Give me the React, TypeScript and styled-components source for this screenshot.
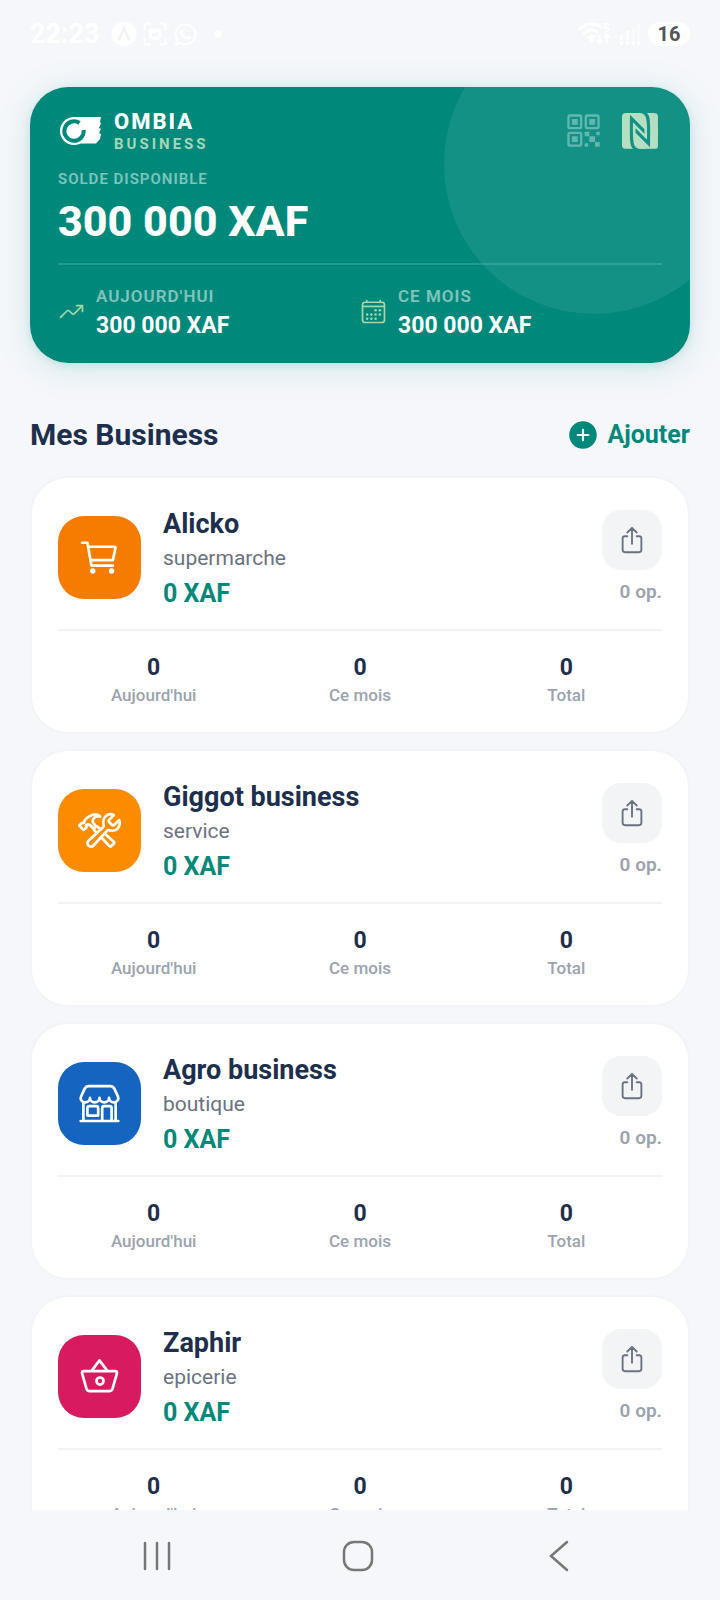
// libs
import { memo } from 'react';
import styled, { createGlobalStyle } from 'styled-components';
import {
  IoAddCircle,
  IoBasketOutline,
  IoCalendarOutline,
  IoCartOutline,
  IoConstructOutline,
  IoLogoWhatsapp,
  IoQrCodeOutline,
  IoShareOutline,
  IoStorefrontOutline,
  IoTrendingUpOutline,
} from 'react-icons/io5';
import { SiNfc } from 'react-icons/si';

// types
import type { IconType } from 'react-icons';

type Business = {
  readonly name: string;
  readonly kind: string;
  readonly color: string;
  readonly icon: IconType;
};

const BUSINESSES: readonly Business[] = [
  { name: 'Alicko', kind: 'supermarche', color: '#f57c00', icon: IoCartOutline },
  { name: 'Giggot business', kind: 'service', color: '#fb8c00', icon: IoConstructOutline },
  { name: 'Agro business', kind: 'boutique', color: '#1565c0', icon: IoStorefrontOutline },
  { name: 'Zaphir', kind: 'epicerie', color: '#d81b60', icon: IoBasketOutline },
];

const PERIODS = ["Aujourd'hui", 'Ce mois', 'Total'];

const GlobalStyle = createGlobalStyle`
  *, *::before, *::after {
    box-sizing: border-box;
  }

  body {
    margin: 0;
    background: #f5f7fb;
    font-family: Roboto, 'Noto Sans', sans-serif;
    color: #1e2f4d;
  }

  h1, h2, p, ul, dl, dt, dd {
    margin: 0;
    padding: 0;
  }

  button {
    font-family: inherit;
    border: 0;
    padding: 0;
    background: none;
    cursor: pointer;
  }

  svg {
    display: block;
    flex: none;
  }
`;

const Screen = styled.div`
  display: flex;
  flex-direction: column;
  height: 100vh;
`;

const StatusBar = styled.header`
  display: flex;
  align-items: center;
  justify-content: space-between;
  flex: none;
  height: 60px;
  padding: 8px 30px 0;
  color: #ffffff;
`;

const StatusGroup = styled.div<{ readonly gap: number }>`
  display: flex;
  align-items: center;
  gap: ${({ gap }) => gap}px;
`;

const Clock = styled.time`
  font-size: 27px;
  font-weight: 700;
  line-height: 32px;
  margin-right: 5px;
`;

const Dot = styled.span`
  width: 8px;
  height: 8px;
  margin-left: 10px;
  border-radius: 50%;
  background: #ffffff;
`;

const Battery = styled.span`
  width: 42px;
  border-radius: 12px;
  background: #ffffff;
  color: #555555;
  font-size: 20px;
  font-weight: 700;
  line-height: 24px;
  text-align: center;
`;

const Content = styled.main`
  flex: 1;
  min-height: 0;
  overflow-y: auto;
  scrollbar-width: none;
  padding: 27px 30px 0;
`;

const BalanceShadow = styled.div`
  border-radius: 38px;
  box-shadow: 0 5px 36px rgba(0, 137, 123, 0.14), 0 2px 8px rgba(0, 137, 123, 0.14);
`;

const Balance = styled.section`
  position: relative;
  overflow: hidden;
  padding: 24px 28px 23px;
  border-radius: 38px;
  background: #00897b;
  color: #ffffff;
`;

const Halo = styled.span`
  position: absolute;
  top: -73px;
  right: -54px;
  width: 300px;
  height: 300px;
  border-radius: 50%;
  background: rgba(255, 255, 255, 0.07);
`;

const BrandRow = styled.div`
  display: flex;
  align-items: flex-start;
  justify-content: space-between;
`;

const Brand = styled.div`
  display: flex;
  align-items: center;
  gap: 11px;
`;

const BrandName = styled.h1`
  font-size: 22px;
  font-weight: 800;
  line-height: 22px;
  letter-spacing: 2px;
`;

const BrandTag = styled.p`
  margin-top: 2px;
  font-size: 15px;
  font-weight: 700;
  line-height: 18px;
  letter-spacing: 3px;
  color: #a5d6b7;
`;

const CardActions = styled.div`
  position: relative;
  display: flex;
  align-items: center;
  gap: 20px;
  padding: 1px 4px 0 0;
`;

const CardAction = styled.button<{ readonly tint: string }>`
  color: ${({ tint }) => tint};
`;

const BalanceLabel = styled.p`
  margin-top: 17px;
  font-size: 15px;
  font-weight: 600;
  line-height: 18px;
  letter-spacing: 1px;
  color: rgba(255, 255, 255, 0.5);
`;

const BalanceAmount = styled.p`
  margin-top: 8px;
  font-size: 43px;
  font-weight: 800;
  line-height: 50px;
`;

const Periods = styled.div`
  position: relative;
  display: grid;
  grid-template-columns: 1fr 1fr;
  margin-top: 17px;
  padding-top: 21px;
  border-top: 2px solid rgba(255, 255, 255, 0.14);
`;

const Period = styled.div`
  display: flex;
  align-items: flex-start;
  gap: 11px;

  > svg {
    margin-top: 12px;
    color: #a5d6a7;
  }
`;

const PeriodLabel = styled.dt`
  font-size: 17px;
  font-weight: 600;
  line-height: 20px;
  letter-spacing: 1px;
  color: rgba(255, 255, 255, 0.5);
`;

const PeriodValue = styled.dd`
  margin-top: 6px;
  font-size: 23px;
  font-weight: 700;
  line-height: 28px;
`;

const SectionHeader = styled.div`
  display: flex;
  align-items: center;
  justify-content: space-between;
  margin: 54px 0 23px;
`;

const SectionTitle = styled.h2`
  font-size: 30px;
  font-weight: 700;
  line-height: 36px;
`;

const AddButton = styled.button`
  display: flex;
  align-items: center;
  gap: 7px;
  font-size: 25px;
  font-weight: 700;
  line-height: 36px;
  color: #00897b;
`;

const List = styled.ul`
  display: flex;
  flex-direction: column;
  gap: 15px;
  padding-bottom: 30px;
  list-style: none;
`;

const Card = styled.li`
  padding: 30px 26px 26px;
  border: 2px solid #f3f4f7;
  border-radius: 38px;
  background: #ffffff;
`;

const CardTop = styled.div`
  display: flex;
  align-items: center;
`;

const Tile = styled.span<{ readonly color: string }>`
  display: flex;
  align-items: center;
  justify-content: center;
  flex: none;
  width: 83px;
  height: 83px;
  margin: 0 22px 2px 0;
  border-radius: 26px;
  background: ${({ color }) => color};
  color: #ffffff;
`;

const Details = styled.div`
  flex: 1;
  min-width: 0;
`;

const Name = styled.h2`
  font-size: 27px;
  font-weight: 700;
  line-height: 32px;
`;

const Kind = styled.p`
  margin-top: 5px;
  font-size: 21px;
  line-height: 26px;
  color: #6b7280;
`;

const Amount = styled.p`
  margin-top: 8px;
  font-size: 25px;
  font-weight: 700;
  line-height: 30px;
  color: #00897b;
`;

const Side = styled.div`
  display: flex;
  flex-direction: column;
  align-items: flex-end;
  gap: 10px;
  margin-bottom: 3px;
`;

const ShareButton = styled.button`
  display: flex;
  align-items: center;
  justify-content: center;
  width: 60px;
  height: 60px;
  border-radius: 19px;
  background: #f3f4f6;
  color: #6b7280;
`;

const Operations = styled.span`
  font-size: 19px;
  font-weight: 600;
  line-height: 24px;
  color: #9ca3af;
`;

const Stats = styled.dl`
  display: grid;
  grid-template-columns: repeat(3, 1fr);
  gap: 15px;
  margin-top: 20px;
  padding-top: 23px;
  border-top: 2px solid #f3f4f6;
  text-align: center;
`;

const Stat = styled.div`
  display: flex;
  flex-direction: column-reverse;
  gap: 2px;
`;

const StatLabel = styled.dt`
  font-size: 17px;
  font-weight: 500;
  line-height: 22px;
  color: #9ca3af;
`;

const StatValue = styled.dd`
  font-size: 23px;
  font-weight: 700;
  line-height: 28px;
`;

const NavBar = styled.nav`
  display: grid;
  grid-template-columns: repeat(3, 1fr);
  flex: none;
  height: 90px;
  padding: 2px 60px 0 56px;
  background: #f5f7fb;
`;

const NavButton = styled.button`
  display: flex;
  align-items: center;
  justify-content: center;
  color: #777777;
`;

const Logo = () => (
  <svg width="45" height="32" viewBox="0 0 45 32" fill="none" aria-hidden="true">
    <path d="M18 1H43L42 6l1 1-2 5 2 1-2 4 2 1-1 5-4 4.500H20z" fill="#ffffff" />
    <circle cx="16" cy="15" r="14" fill="#ffffff" />
    <path d="M21.500 7A9.700 9.700 0 1 0 25.700 14" stroke="#00897b" strokeWidth="4" />
    <circle cx="16" cy="15" r="6" fill="#ffffff" />
    <path d="M17 10l4-1h10v4H19z" fill="#ffffff" />
  </svg>
);

const ExpoBadge = () => (
  <svg width="26" height="26" viewBox="0 0 26 26" aria-hidden="true">
    <circle cx="13" cy="13" r="12.500" fill="#ffffff" />
    <path d="M8 18.500l5-11 5 11" fill="none" stroke="#f0f2f6" strokeWidth="2.500" strokeLinecap="round" />
  </svg>
);

const CaptureBadge = () => (
  <svg width="24" height="24" viewBox="0 0 24 24" fill="none" aria-hidden="true">
    <path
      d="M1.500 7V4A2.500 2.500 0 0 1 4 1.500h3M17 1.500h3A2.500 2.500 0 0 1 22.500 4v3M22.500 17v3a2.500 2.500 0 0 1-2.500 2.500h-3M7 22.500H4A2.500 2.500 0 0 1 1.500 20v-3"
      stroke="#ffffff"
      strokeWidth="2"
      strokeLinecap="round"
    />
    <rect x="6" y="6.500" width="12" height="11" rx="3" fill="#ffffff" />
    <path d="M9 14v-3l2 1 4-2v4z" fill="#f3f5f9" />
  </svg>
);

const Wifi = () => (
  <svg width="34" height="24" viewBox="0 0 34 24" fill="none" stroke="#ffffff" strokeWidth="3" aria-hidden="true">
    <path d="M1 7.500C8 .5 18 .5 24 6M5 12c5-5 11-5 15-1M9.500 16c3-2.500 6-2.500 8 0" />
    <circle cx="13.500" cy="18.500" r="1" />
    <path d="M21.500 13v8M18.500 18l3 3.500 3-3.500M29 21v-8M26 16l3-3.500 3 3.500" strokeWidth="2" />
    <path d="M31 2h-4.500v3.500c5-1 5.500 4 0 4" strokeWidth="2" />
  </svg>
);

const Signal = () => (
  <svg width="22" height="24" viewBox="0 0 22 24" fill="#ffffff" aria-hidden="true">
    <path d="M1 13h3v5H1zM7 9h3v9H7zM1 19.500h3V23H1zM7 19.500h3V23H7zM13 19.500h3V23h-3zM18 19.500h3V23h-3z" />
    <path d="M13 6h3v12h-3zM18 2h3v16h-3z" opacity="0.4" />
  </svg>
);

const BusinessCard = memo(({ name, kind, color, icon: Icon }: Business) => (
  <Card>
    <CardTop>
      <Tile color={color}>
        <Icon size={43} />
      </Tile>
      <Details>
        <Name>{name}</Name>
        <Kind>{kind}</Kind>
        <Amount>0 XAF</Amount>
      </Details>
      <Side>
        <ShareButton type="button" aria-label={`Partager ${name}`}>
          <IoShareOutline size={30} />
        </ShareButton>
        <Operations>0 op.</Operations>
      </Side>
    </CardTop>

    <Stats>
      {PERIODS.map((period) => (
        <Stat key={period}>
          <StatLabel>{period}</StatLabel>
          <StatValue>0</StatValue>
        </Stat>
      ))}
    </Stats>
  </Card>
));

export default function App() {
  return (
    <Screen>
      <GlobalStyle />

      <StatusBar>
        <StatusGroup gap={6}>
          <Clock>22:23</Clock>
          <ExpoBadge />
          <CaptureBadge />
          <IoLogoWhatsapp size={25} />
          <Dot />
        </StatusGroup>
        <StatusGroup gap={7}>
          <Wifi />
          <Signal />
          <Battery>16</Battery>
        </StatusGroup>
      </StatusBar>

      <Content>
        <BalanceShadow>
          <Balance>
            <Halo />
            <BrandRow>
              <Brand>
                <Logo />
                <div>
                  <BrandName>OMBIA</BrandName>
                  <BrandTag>BUSINESS</BrandTag>
                </div>
              </Brand>
              <CardActions>
                <CardAction type="button" tint="rgba(255, 255, 255, 0.35)" aria-label="QR code">
                  <IoQrCodeOutline size={37} />
                </CardAction>
                <CardAction type="button" tint="#b5dfc1" aria-label="NFC">
                  <SiNfc size={36} />
                </CardAction>
              </CardActions>
            </BrandRow>

            <BalanceLabel>SOLDE DISPONIBLE</BalanceLabel>
            <BalanceAmount>300 000 XAF</BalanceAmount>

            <Periods>
              <Period>
                <IoTrendingUpOutline size={27} />
                <dl>
                  <PeriodLabel>AUJOURD'HUI</PeriodLabel>
                  <PeriodValue>300 000 XAF</PeriodValue>
                </dl>
              </Period>
              <Period>
                <IoCalendarOutline size={27} />
                <dl>
                  <PeriodLabel>CE MOIS</PeriodLabel>
                  <PeriodValue>300 000 XAF</PeriodValue>
                </dl>
              </Period>
            </Periods>
          </Balance>
        </BalanceShadow>

        <SectionHeader>
          <SectionTitle>Mes Business</SectionTitle>
          <AddButton type="button">
            <IoAddCircle size={34} />
            Ajouter
          </AddButton>
        </SectionHeader>

        <List>
          {BUSINESSES.map((business) => (
            <BusinessCard key={business.name} {...business} />
          ))}
        </List>
      </Content>

      <NavBar>
        <NavButton type="button" aria-label="Applications récentes">
          <svg width="28" height="30" viewBox="0 0 28 30" stroke="currentColor" strokeWidth="2.500" strokeLinecap="round">
            <path d="M2 2v26M14 2v26M26 2v26" />
          </svg>
        </NavButton>
        <NavButton type="button" aria-label="Accueil">
          <svg width="32" height="32" viewBox="0 0 32 32" fill="none" stroke="currentColor" strokeWidth="2.500">
            <rect x="2" y="2" width="28" height="28" rx="10" />
          </svg>
        </NavButton>
        <NavButton type="button" aria-label="Retour">
          <svg width="20" height="32" viewBox="0 0 20 32" fill="none" stroke="currentColor" strokeWidth="2.500" strokeLinecap="round">
            <path d="M18 2L2 16l16 14" />
          </svg>
        </NavButton>
      </NavBar>
    </Screen>
  );
}
